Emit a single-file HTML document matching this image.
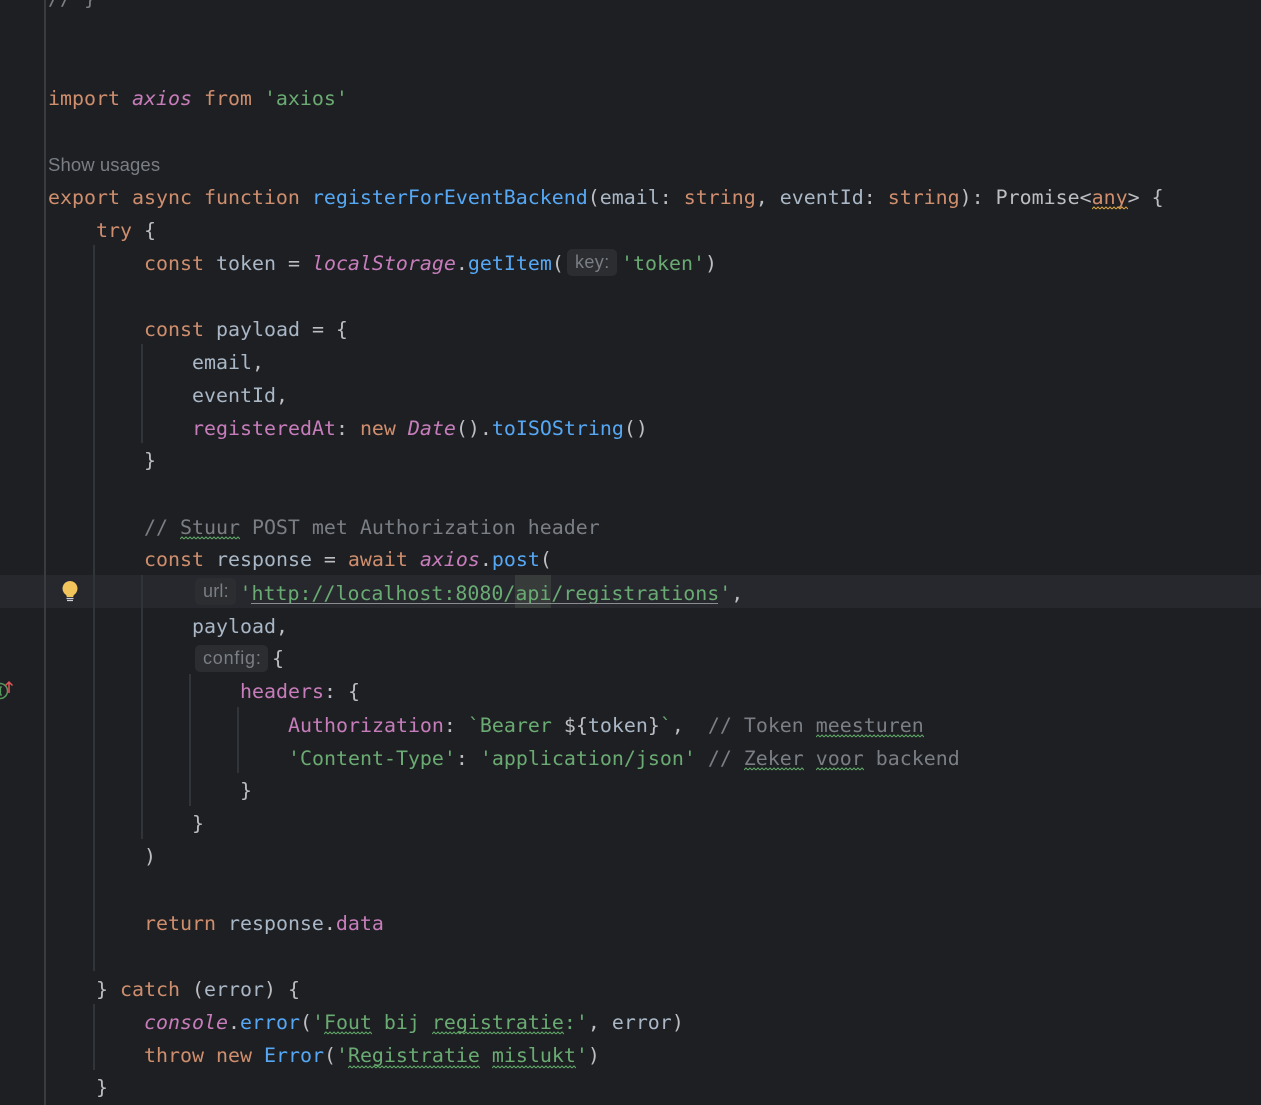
<!DOCTYPE html>
<html><head><meta charset="utf-8">
<style>
html,body{margin:0;padding:0;background:#1e1f22;}
#r{position:relative;width:1261px;height:1105px;overflow:hidden;background:#1e1f22;font-family:"DejaVu Sans Mono","Liberation Mono",monospace;font-size:19.93px;color:#bcbec4;}
.l{position:absolute;white-space:pre;height:33px;line-height:33px;margin-top:1px;}
.k{color:#cf8e6d}.s{color:#6aab73}.f{color:#56a8f5}.v{color:#a9b7c6}.c{color:#7a7e85}.p{color:#c77dbb}.i{font-style:italic}
.g{position:absolute;width:2px;background:#313438}
.h{position:absolute;height:27px;border-radius:5px;background:#2b2d30;color:#7a7e85;font:18px/27px "Liberation Sans",sans-serif;box-sizing:border-box;padding-left:8px;white-space:pre}
</style></head><body><div id="r">
<div style="position:absolute;left:0;top:575px;width:1261px;height:33px;background:#26282e"></div>
<div style="position:absolute;left:515px;top:575px;width:36px;height:33px;background:#373b39"></div>
<div style="position:absolute;left:44px;top:0;width:2px;height:1105px;background:#393b40"></div>
<div class="g" style="left:93px;top:245px;height:726px"></div>
<div class="g" style="left:93px;top:1004px;height:66px"></div>
<div class="g" style="left:141px;top:344px;height:99px"></div>
<div class="g" style="left:141px;top:575px;height:264px"></div>
<div class="g" style="left:189px;top:674px;height:132px"></div>
<div class="g" style="left:237px;top:707px;height:66px"></div>

<div class="l c" style="left:48px;top:-19px">// }</div>
<div class="l" style="left:48px;top:81px"><span class="k">import</span> <span class="p i">axios</span> <span class="k">from</span> <span class="s">'axios'</span></div>
<div class="l" style="left:48px;top:148px;margin-top:0;font:18.5px/33px 'Liberation Sans',sans-serif;letter-spacing:.1px;color:#7a7e85">Show usages</div>
<div class="l" style="left:48px;top:180px"><span class="k">export</span> <span class="k">async</span> <span class="k">function</span> <span class="f">registerForEventBackend</span>(<span class="v">email</span>: <span class="k">string</span>, <span class="v">eventId</span>: <span class="k">string</span>): Promise&lt;<span class="k">any</span>&gt; {</div>
<div class="l" style="left:96px;top:213px"><span class="k">try</span> {</div>
<div class="l" style="left:144px;top:246px"><span class="k">const</span> <span class="v">token</span> = <span class="p i">localStorage</span>.<span class="f">getItem</span>(</div>
<div class="h" style="left:567px;top:249px;width:50px;letter-spacing:.4px">key:</div>
<div class="l" style="left:621px;top:246px"><span class="s">'token'</span>)</div>
<div class="l" style="left:144px;top:312px"><span class="k">const</span> <span class="v">payload</span> = {</div>
<div class="l v" style="left:192px;top:345px">email<span style="color:#bcbec4">,</span></div>
<div class="l v" style="left:192px;top:378px">eventId<span style="color:#bcbec4">,</span></div>
<div class="l" style="left:192px;top:411px"><span class="p">registeredAt</span>: <span class="k">new</span> <span class="p i">Date</span>().<span class="f">toISOString</span>()</div>
<div class="l" style="left:144px;top:443px">}</div>
<div class="l c" style="left:144px;top:510px">// Stuur POST met Authorization header</div>
<div class="l" style="left:144px;top:542px"><span class="k">const</span> <span class="v">response</span> = <span class="k">await</span> <span class="p i">axios</span>.<span class="f">post</span>(</div>
<div class="h" style="left:195px;top:578px;width:41px;letter-spacing:.2px">url:</div>
<div class="l s" style="left:239.500px;top:576px">'http://localhost:8080/api/registrations'<span style="color:#bcbec4">,</span></div>
<div style="position:absolute;left:251px;top:603px;width:467px;height:1px;background:#8a8d90"></div>
<div class="l v" style="left:192px;top:609px">payload<span style="color:#bcbec4">,</span></div>
<div class="h" style="left:195px;top:645px;width:73px;letter-spacing:.8px">config:</div>
<div class="l" style="left:272px;top:641px">{</div>
<div class="l" style="left:240px;top:674px"><span class="p">headers</span>: {</div>
<div class="l" style="left:288px;top:708px"><span class="p">Authorization</span>: <span class="s">`Bearer </span>${<span class="v">token</span>}<span class="s">`</span>,  <span class="c">// Token meesturen</span></div>
<div class="l" style="left:288px;top:741px"><span class="s">'Content-Type'</span>: <span class="s">'application/json'</span> <span class="c">// Zeker voor backend</span></div>
<div class="l" style="left:240px;top:773px">}</div>
<div class="l" style="left:192px;top:806px">}</div>
<div class="l" style="left:144px;top:839px">)</div>
<div class="l" style="left:144px;top:906px"><span class="k">return</span> <span class="v">response</span>.<span class="p">data</span></div>
<div class="l" style="left:96px;top:972px">} <span class="k">catch</span> (<span class="v">error</span>) {</div>
<div class="l" style="left:144px;top:1005px"><span class="p i">console</span>.<span class="f">error</span>(<span class="s">'Fout bij registratie:'</span>, <span class="v">error</span>)</div>
<div class="l" style="left:144px;top:1038px"><span class="k">throw</span> <span class="k">new</span> <span class="f">Error</span>(<span class="s">'Registratie mislukt'</span>)</div>
<div class="l" style="left:96px;top:1070px">}</div>

<svg width="1261" height="1105" style="position:absolute;left:0;top:0">
<defs>
<pattern id="gw" width="4" height="4" patternUnits="userSpaceOnUse"><path d="M0 3 L2 1 L4 3" fill="none" stroke="#5fa868" stroke-width="1"/></pattern>
<pattern id="yw" width="4" height="4" patternUnits="userSpaceOnUse"><path d="M0 3 L2 1 L4 3" fill="none" stroke="#d9a343" stroke-width="1"/></pattern>
</defs>
<g transform="translate(0,206)"><rect x="1092" y="0" width="36" height="4" fill="url(#yw)"/></g>
<g fill="url(#gw)">
<g transform="translate(0,536)"><rect x="180" width="60" height="4"/></g>
<g transform="translate(0,734)"><rect x="816" width="108" height="4"/></g>
<g transform="translate(0,767)"><rect x="744" width="60" height="4"/><rect x="816" width="48" height="4"/></g>
<g transform="translate(0,1031)"><rect x="324" width="48" height="4"/><rect x="432" width="132" height="4"/></g>
<g transform="translate(0,1065)"><rect x="348" width="132" height="4"/><rect x="492" width="84" height="4"/></g>
</g>
<path d="M70 581a7.5 7.5 0 0 0-4.5 13.5c.8.7 1.2 1.3 1.3 2.5h6.4c.1-1.200.5-1.800 1.300-2.500A7.500 7.500 0 0 0 70 581z" fill="#f2c55c"/>
<path d="M66.500 598.500h7M67 600.500h6" stroke="#ced0d6" stroke-width="1.200"/>
<circle cx="0" cy="691" r="7.500" fill="none" stroke="#57965c" stroke-width="1.500"/>
<path d="M-1 687h3M.5 687v8M-1 695h3" fill="none" stroke="#57965c" stroke-width="1.300"/>
<path d="M9 693v-11M5.500 685.500L9 682l3.500 3.500" fill="none" stroke="#e05555" stroke-width="1.500"/>
</svg>
</div></body></html>
